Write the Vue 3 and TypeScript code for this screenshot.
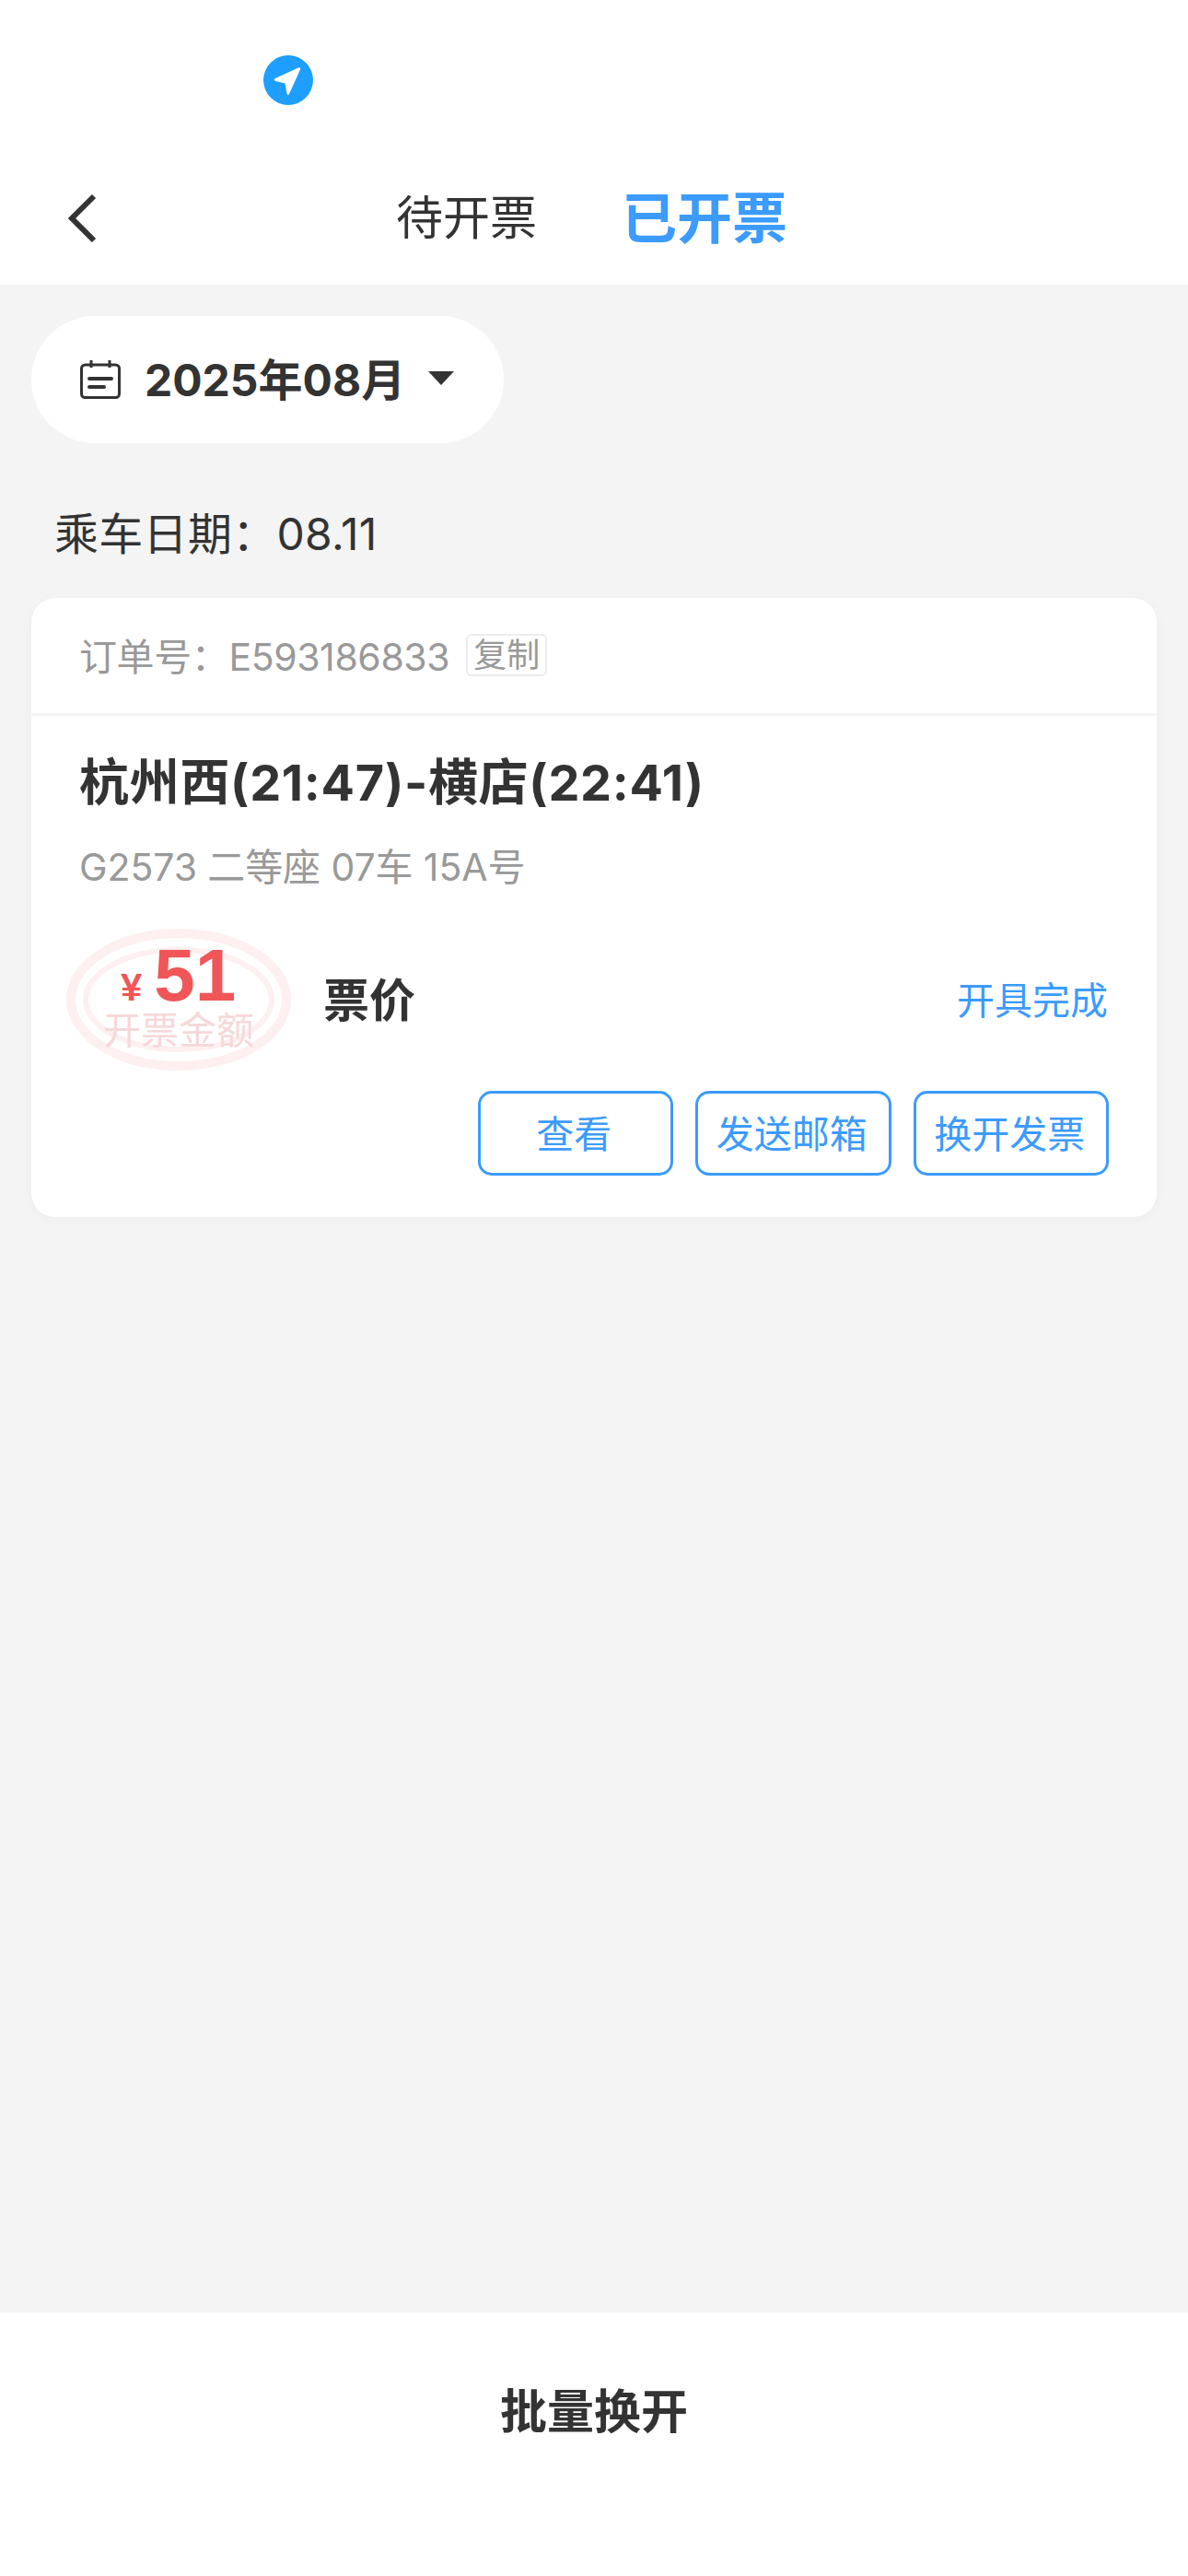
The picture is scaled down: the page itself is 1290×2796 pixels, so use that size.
<script setup lang="ts">
const actions = ['查看', '发送邮箱', '换开发票']
</script>

<template>
  <div class="page">
    <header class="header">
      <div class="status">
        <svg class="locate" viewBox="0 0 54 54">
          <circle cx="27" cy="27" r="27" fill="#1e9fff" />
          <path d="M40 15.5 L28 42 Q26.5 44 25.5 41.5 L23.5 30.5 L13 28 Q10.5 26.5 13 25 L38 13.5 Q41 12.8 40 15.5 Z" fill="#fff" />
        </svg>
      </div>
      <nav class="nav">
        <svg class="back" viewBox="0 0 32 54" fill="none">
          <path d="M29 3 L5 27 L29 51" stroke="#333" stroke-width="6" />
        </svg>
        <span class="tab">待开票</span>
        <span class="tab tab-active">已开票</span>
      </nav>
    </header>

    <main class="content">
      <div class="month">
        <svg class="cal" viewBox="0 0 44 42" fill="none" stroke="#333" stroke-width="3">
          <rect x="1.5" y="5" width="41" height="35.5" rx="4" />
          <path d="M12 0 V8 M32 0 V8" />
          <path d="M10 20 H34 M10 29 H26" stroke-width="4" stroke-linecap="round" />
        </svg>
        <span class="month-text">2025年08月</span>
        <i class="caret"></i>
      </div>

      <div class="date">乘车日期：08.11</div>

      <section class="card">
        <div class="order">
          <span class="order-no">订单号：E593186833</span>
          <span class="copy">复制</span>
        </div>
        <div class="body">
          <h2 class="route">杭州西(21:47)-横店(22:41)</h2>
          <p class="seat">G2573 二等座 07车 15A号</p>
          <div class="price-row">
            <div class="stamp">
              <svg class="rings" viewBox="0 0 244 154" fill="none" stroke="#feeff0">
                <ellipse cx="122" cy="77" rx="117" ry="72" stroke-width="10" />
                <ellipse cx="122" cy="77" rx="101" ry="54" stroke-width="6" />
              </svg>
              <div class="amount"><span class="yen">¥</span><span class="num">51</span></div>
              <div class="stamp-label">开票金额</div>
            </div>
            <span class="price-name">票价</span>
            <span class="state">开具完成</span>
          </div>
          <div class="actions">
            <button v-for="a in actions" :key="a" class="btn">{{ a }}</button>
          </div>
        </div>
      </section>
    </main>

    <footer class="footer">批量换开</footer>
  </div>
</template>

<style>
html, body { margin: 0; padding: 0; }
</style>

<style scoped>
.page {
  width: 1290px;
  height: 2796px;
  display: flex;
  flex-direction: column;
  background: #f4f4f4;
  color: #333;
  font-family: Inter, "Noto Sans CJK SC", sans-serif;
  overflow: hidden;
}

.header {
  height: 309px;
  background: #fff;
  flex: none;
}
.status {
  height: 177px;
  padding: 60px 0 0 286px;
  box-sizing: border-box;
}
.locate { width: 54px; height: 54px; display: block; }

.nav {
  height: 132px;
  display: flex;
  align-items: center;
  padding-left: 73px;
  padding-bottom: 12px;
  box-sizing: border-box;
}
.back { width: 32px; height: 54px; margin-right: 325px; }
.tab { font-size: 51px; line-height: 60px; margin-right: 92px; }
.tab-active { font-size: 60px; font-weight: 700; color: #3b9bff; margin-right: 0; }

.content { flex: 1; padding: 34px 34px 0; }

.month {
  width: 513px;
  height: 138px;
  border-radius: 69px;
  background: #fff;
  display: flex;
  align-items: center;
  padding-left: 53px;
  box-sizing: border-box;
}
.cal { width: 44px; height: 42px; margin-right: 26px; }
.month-text { font-size: 48px; font-weight: 700; position: relative; top: -3px; }
.caret {
  margin-left: 25px;
  border-left: 14px solid transparent;
  border-right: 14px solid transparent;
  border-top: 15px solid #333;
  margin-top: -4px;
}

.date {
  margin: 68px 0 0 25px;
  height: 100px;
  font-size: 48px;
  line-height: 62px;
  letter-spacing: 0.3px;
}

.card {
  height: 672px;
  background: #fff;
  border-radius: 26px;
  box-shadow: 0 2px 14px rgba(0, 0, 0, 0.03);
  display: flex;
  flex-direction: column;
}
.order {
  height: 128px;
  flex: none;
  box-sizing: border-box;
  border-bottom: 3px solid #f4f4f4;
  padding: 0 52px 3px;
  display: flex;
  align-items: center;
  font-size: 41px;
  color: #999;
}
.order-no { letter-spacing: -0.4px; }
.copy {
  margin-left: 18px;
  font-size: 36px;
  line-height: 40px;
  padding: 1px 6px;
  border: 2px solid #ececec;
  border-radius: 6px;
  position: relative;
  top: 1px;
}

.body { padding: 0 52px; }
.route {
  margin: 40px 0 0;
  font-size: 54px;
  line-height: 66px;
  font-weight: 700;
  letter-spacing: 0.7px;
}
.seat {
  margin: 32px 0 0;
  font-size: 41px;
  line-height: 52px;
  color: #999;
  letter-spacing: -0.1px;
}

.price-row {
  margin-top: 41px;
  display: flex;
  align-items: center;
  height: 154px;
}
.stamp {
  position: relative;
  width: 244px;
  height: 154px;
  margin-left: -14px;
  flex: none;
}
.rings { position: absolute; inset: 0; width: 100%; height: 100%; }
.amount {
  position: absolute;
  left: 59px;
  top: 18px;
  display: flex;
  align-items: baseline;
  color: #f05558;
  font-weight: 700;
  font-family: "Liberation Sans", sans-serif;
}
.yen { font-size: 42px; margin-right: 13px; }
.num { font-size: 80px; line-height: 66px; }
.stamp-label {
  position: absolute;
  left: 40px;
  top: 88px;
  font-size: 41px;
  line-height: 44px;
  white-space: nowrap;
  color: #f6d8d8;
}
.price-name { margin-left: 35px; font-size: 50px; font-weight: 700; position: relative; top: -3px; }
.state { margin-left: auto; margin-right: 1px; font-size: 41px; color: #3b9bff; position: relative; top: -2px; }

.actions {
  margin-top: 22px;
  display: flex;
  justify-content: flex-end;
  gap: 24px;
}
.btn {
  width: 212.5px;
  height: 92px;
  padding: 0 3px 4px 0;
  background: #fff;
  border: 3px solid #3b9bff;
  border-radius: 15px;
  color: #3b9bff;
  font-family: inherit;
  font-size: 41px;
}

.footer {
  flex: none;
  height: 286px;
  background: #fff;
  padding-top: 75px;
  box-sizing: border-box;
  text-align: center;
  font-size: 51px;
  line-height: 66px;
  font-weight: 700;
}
</style>
